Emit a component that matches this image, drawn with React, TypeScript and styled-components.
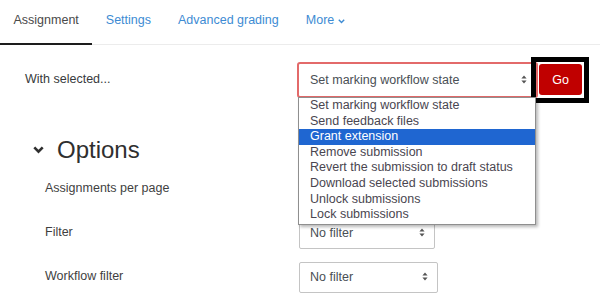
import React from "react";
import styled, { createGlobalStyle } from "styled-components";

const Global = createGlobalStyle`
  html, body { margin: 0; padding: 0; background: #fff; }
  body {
    font-family: "Liberation Sans", Arial, sans-serif;
    font-size: 12.5px;
    color: #373a3c;
    width: 600px;
    height: 300px;
    overflow: hidden;
  }
`;

const Page = styled.div`
  display: flex;
  flex-direction: column;
`;

const TabBar = styled.nav`
  display: flex;
  align-items: flex-start;
  height: 45px;
  box-sizing: border-box;
  border-bottom: 1px solid #ececec;
`;

const Tab = styled.a<{ $active?: boolean }>`
  display: flex;
  align-items: center;
  gap: 4px;
  height: 45px;
  box-sizing: border-box;
  padding: 0 13.5px 3px;
  border-bottom: 2px solid ${(p) => (p.$active ? "#1d1d1d" : "transparent")};
  color: ${(p) => (p.$active ? "#4a4a4a" : "#3d8bd3")};
  text-decoration: none;
  white-space: nowrap;
`;

const ActionRow = styled.div`
  display: flex;
  align-items: flex-start;
  margin-top: 17px;
  padding-left: 25px;
`;

const ActionLabel = styled.div`
  width: 272px;
  padding-top: 10px;
  color: #373a3c;
`;

const SelectWrap = styled.div`
  position: relative;
`;

const ActiveSelect = styled.div`
  display: flex;
  align-items: center;
  justify-content: space-between;
  width: 241px;
  height: 36px;
  box-sizing: border-box;
  border: 2px solid #e36a6a;
  border-radius: 3px;
  padding: 0 9px 1px 11px;
  color: #4a4f55;
  background: #fff;
`;

const Dropdown = styled.ul`
  position: absolute;
  top: 35px;
  left: 1px;
  width: 238px;
  margin: 0;
  padding: 0 0 1px;
  list-style: none;
  box-sizing: border-box;
  background: #fff;
  border: 1px solid #8f8f8f;
  box-shadow: 2px 2px 3px rgba(0, 0, 0, 0.28);
  z-index: 10;
`;

const Option = styled.li<{ $selected?: boolean }>`
  height: 15.6px;
  line-height: 15.6px;
  padding-left: 11px;
  white-space: nowrap;
  color: ${(p) => (p.$selected ? "#fff" : "#4a4650")};
  background: ${(p) => (p.$selected ? "#1f66d1" : "transparent")};
`;

const GoWrap = styled.div`
  position: relative;
  margin-left: 1px;
  margin-top: 2px;
`;

const GoButton = styled.button`
  display: flex;
  align-items: center;
  justify-content: center;
  width: 43px;
  height: 31px;
  border: none;
  border-radius: 3px;
  background: #c00000;
  color: #fff;
  font-family: "Liberation Sans", Arial, sans-serif;
  font-size: 12.5px;
  padding: 0;
`;

const Highlight = styled.span`
  position: absolute;
  top: -7px;
  left: -8px;
  right: -7px;
  bottom: -8px;
  border: 5px solid #000;
  pointer-events: none;
`;

const Heading = styled.h2`
  display: flex;
  align-items: center;
  gap: 13px;
  height: 30px;
  margin: 37px 0 0;
  padding-left: 33px;
  font-size: 24px;
  font-weight: 400;
  color: #2f2f2f;
`;

const FormRows = styled.div`
  display: flex;
  flex-direction: column;
  gap: 13px;
  margin-top: 9px;
`;

const FormRow = styled.div`
  display: flex;
  align-items: center;
  padding-left: 45px;
`;

const FormLabel = styled.div`
  width: 254px;
  padding-bottom: 3px;
  color: #3f3f3f;
`;

const PlainSelect = styled.div<{ $w: number }>`
  display: flex;
  align-items: center;
  justify-content: space-between;
  width: ${(p) => p.$w}px;
  height: 31px;
  box-sizing: border-box;
  border: 1px solid #c4c4c4;
  border-radius: 2px;
  padding: 0 9px 2px 10px;
  color: #4a4f55;
`;

const Arrows = () => (
  <svg width="6" height="9" viewBox="0 0 6 9">
    <path d="M3 0.5 L5.6 3.6 H0.4 Z M3 8.5 L5.6 5.4 H0.4 Z" fill="#555" />
  </svg>
);

const SmallChevron = () => (
  <svg width="7" height="5" viewBox="0 0 7 5" style={{ marginTop: 2 }}>
    <path d="M0.8 0.8 L3.5 3.6 L6.2 0.8" fill="none" stroke="#3d8bd3" strokeWidth="1.4" />
  </svg>
);

const HeadChevron = () => (
  <svg width="11" height="8" viewBox="0 0 11 8">
    <path d="M1.3 1.3 L5.5 5.7 L9.7 1.3" fill="none" stroke="#2f2f2f" strokeWidth="2.6" />
  </svg>
);

const options = [
  "Set marking workflow state",
  "Send feedback files",
  "Grant extension",
  "Remove submission",
  "Revert the submission to draft status",
  "Download selected submissions",
  "Unlock submissions",
  "Lock submissions",
];

export default function App() {
  return (
    <Page>
      <Global />
      <TabBar>
        <Tab $active>Assignment</Tab>
        <Tab>Settings</Tab>
        <Tab>Advanced grading</Tab>
        <Tab>
          More <SmallChevron />
        </Tab>
      </TabBar>

      <ActionRow>
        <ActionLabel>With selected...</ActionLabel>
        <SelectWrap>
          <ActiveSelect>
            <span>Set marking workflow state</span>
            <Arrows />
          </ActiveSelect>
          <Dropdown>
            {options.map((o) => (
              <Option key={o} $selected={o === "Grant extension"}>
                {o}
              </Option>
            ))}
          </Dropdown>
        </SelectWrap>
        <GoWrap>
          <GoButton>Go</GoButton>
          <Highlight />
        </GoWrap>
      </ActionRow>

      <Heading>
        <HeadChevron />
        Options
      </Heading>

      <FormRows>
        <FormRow>
          <FormLabel>Assignments per page</FormLabel>
          <PlainSelect $w={136} />
        </FormRow>
        <FormRow>
          <FormLabel>Filter</FormLabel>
          <PlainSelect $w={136}>
            <span>No filter</span>
            <Arrows />
          </PlainSelect>
        </FormRow>
        <FormRow>
          <FormLabel>Workflow filter</FormLabel>
          <PlainSelect $w={139}>
            <span>No filter</span>
            <Arrows />
          </PlainSelect>
        </FormRow>
      </FormRows>
    </Page>
  );
}
